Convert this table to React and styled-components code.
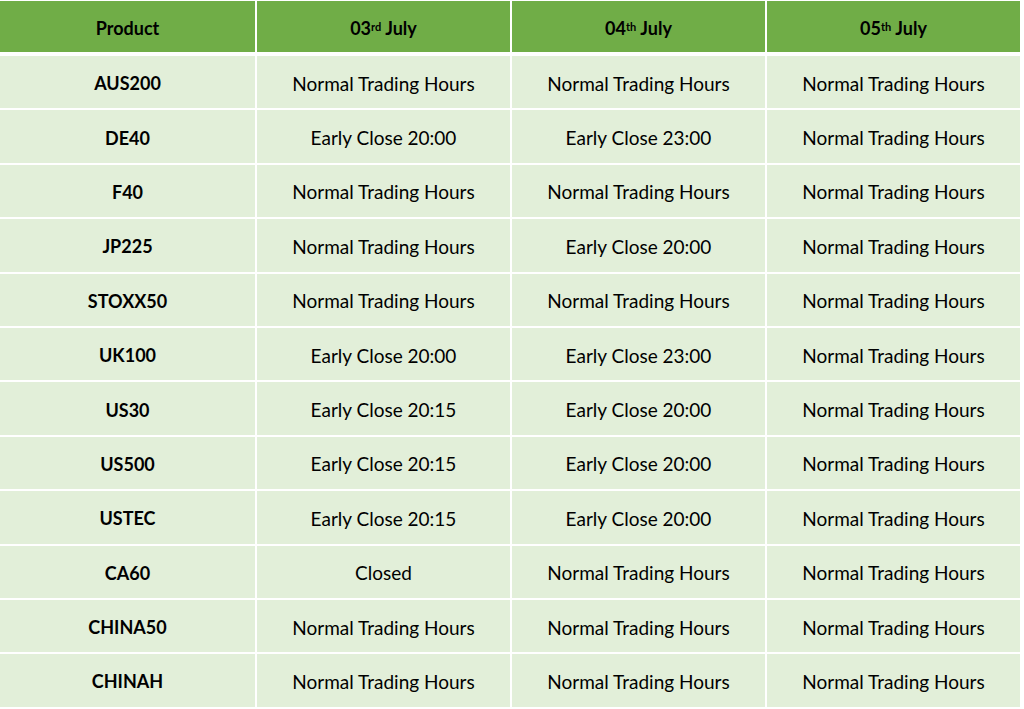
import React from "react";
import styled, { createGlobalStyle } from "styled-components";

const Global = createGlobalStyle`
  html, body {
    margin: 0;
    padding: 0;
    background: #ffffff;
  }
`;

const Table = styled.div`
  width: 1022px;
  padding-top: 1px;
  display: flex;
  flex-direction: column;
  gap: 2px;
  font-family: Lato, "Liberation Sans", sans-serif;
  color: #000;
`;

const Row = styled.div`
  display: grid;
  grid-template-columns: 255px 253px 253px 253px;
  column-gap: 2px;
  height: ${p => (p.$head ? "51px" : "52.4px")};
  margin-bottom: ${p => (p.$head ? "2px" : "0")};
`;

const Cell = styled.div`
  display: flex;
  align-items: center;
  justify-content: center;
  padding-top: 2px;
  background: ${p => (p.$head ? "#70ad47" : "#e2efd9")};
  font-size: ${p => (p.$bold ? "18px" : "19px")};
  font-weight: ${p => (p.$bold ? 700 : 400)};
  white-space: nowrap;
`;

const Sup = styled.sup`
  font-size: 11px;
  line-height: 0;
  margin-right: 4px;
  position: relative;
  top: -1px;
`;

const rows = [
  ["AUS200", "Normal Trading Hours", "Normal Trading Hours", "Normal Trading Hours"],
  ["DE40", "Early Close 20:00", "Early Close 23:00", "Normal Trading Hours"],
  ["F40", "Normal Trading Hours", "Normal Trading Hours", "Normal Trading Hours"],
  ["JP225", "Normal Trading Hours", "Early Close 20:00", "Normal Trading Hours"],
  ["STOXX50", "Normal Trading Hours", "Normal Trading Hours", "Normal Trading Hours"],
  ["UK100", "Early Close 20:00", "Early Close 23:00", "Normal Trading Hours"],
  ["US30", "Early Close 20:15", "Early Close 20:00", "Normal Trading Hours"],
  ["US500", "Early Close 20:15", "Early Close 20:00", "Normal Trading Hours"],
  ["USTEC", "Early Close 20:15", "Early Close 20:00", "Normal Trading Hours"],
  ["CA60", "Closed", "Normal Trading Hours", "Normal Trading Hours"],
  ["CHINA50", "Normal Trading Hours", "Normal Trading Hours", "Normal Trading Hours"],
  ["CHINAH", "Normal Trading Hours", "Normal Trading Hours", "Normal Trading Hours"],
];

const days = [
  ["03", "rd"],
  ["04", "th"],
  ["05", "th"],
];

export default function App() {
  return (
    <>
      <Global />
      <Table>
        <Row $head>
          <Cell $head $bold>Product</Cell>
          {days.map(([d, s]) => (
            <Cell $head $bold key={d}>
              {d}
              <Sup>{s}</Sup>July
            </Cell>
          ))}
        </Row>
        {rows.map(r => (
          <Row key={r[0]}>
            <Cell $bold>{r[0]}</Cell>
            <Cell>{r[1]}</Cell>
            <Cell>{r[2]}</Cell>
            <Cell>{r[3]}</Cell>
          </Row>
        ))}
      </Table>
    </>
  );
}
